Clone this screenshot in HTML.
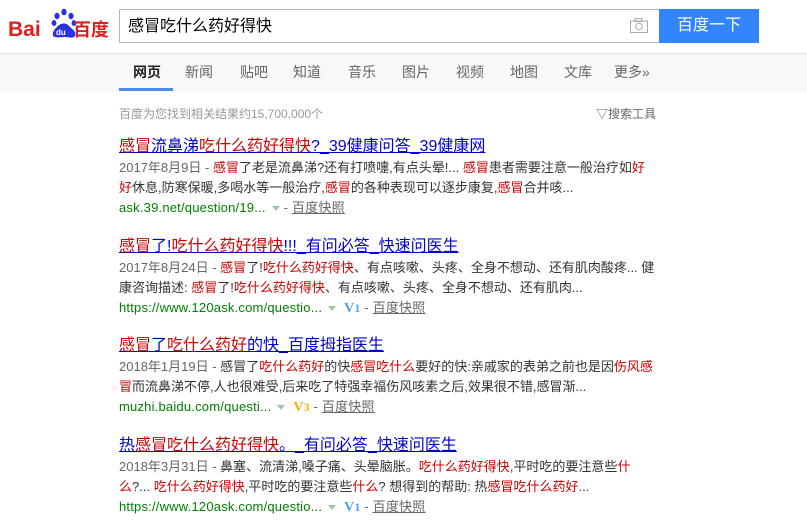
<!DOCTYPE html>
<html><head><meta charset="utf-8"><style>
*{margin:0;padding:0;box-sizing:border-box}
body{width:807px;height:523px;background:#fff;font-family:"Liberation Sans","Noto Sans CJK SC",sans-serif;position:relative;overflow:hidden;color:#333}
.abs{position:absolute}
#box{left:119px;top:9px;width:541px;height:34px;border:1px solid #b8b8b8;border-right:none;font-size:16px;line-height:33px;padding-left:8px;color:#000}
#btn{left:659px;top:9px;width:100px;height:34px;background:#3385ff;color:#fff;font-size:16px;line-height:34px;text-align:center}
#nav{left:0;top:53px;width:807px;height:38px;background:#f8f8f8;border-top:1px solid #e5e5e5}
.tab{top:53px;font-size:14px;line-height:38px;color:#666}
#ul{left:119px;top:88px;width:54px;height:3px;background:#4e8ae6}
.cnt{font-size:12px;color:#999}
.r{position:absolute;left:119px;width:560px}
.t{font-size:16px;line-height:22px;height:22px;text-decoration:underline;color:#00c;white-space:nowrap}
.a{font-size:13px;line-height:20px;color:#333;white-space:nowrap}
.d{color:#666}
em{font-style:normal;color:#c00}
.u{font-size:13px;line-height:20px;color:#008000;white-space:nowrap;letter-spacing:0.2px}
.u .k{color:#666;text-decoration:underline}
.arr{display:inline-block;width:0;height:0;border-left:4px solid transparent;border-right:4px solid transparent;border-top:5px solid #99c6a0;margin:0 4px 1px 6px;vertical-align:middle}
.v{font-family:"Liberation Serif",serif;font-weight:bold;font-size:14px;margin-left:4px}
</style></head><body>
<svg class="abs" style="left:8px;top:5px" width="102" height="36" viewBox="0 0 102 36">
<text x="0" y="31" font-family="Liberation Sans" font-weight="bold" font-size="21" fill="#de1f1f">Bai</text>
<g fill="#2932e1"><ellipse cx="49" cy="11" rx="2.6" ry="3.2"/><ellipse cx="56" cy="7" rx="2.6" ry="3.3"/><ellipse cx="63" cy="11" rx="2.6" ry="3.2"/><ellipse cx="66" cy="18" rx="2.4" ry="3"/><ellipse cx="46" cy="18" rx="2.4" ry="3"/><path d="M47 32 C43 31 45 25 49 22 C52 18 58 17 61 21 C64 24 69 27 67 31 C65 34 61 32 57 32 C53 32 51 33 47 32Z"/></g>
<text x="48" y="30" font-family="Liberation Sans" font-weight="bold" font-size="8" fill="#fff">du</text>
<text x="65" y="31" font-family="Noto Sans CJK SC" font-weight="bold" font-size="18" fill="#de1f1f">百度</text>
</svg>
<div id="box" class="abs">感冒吃什么药好得快</div>
<svg class="abs" style="left:630px;top:18px" width="18" height="15" viewBox="0 0 18 15"><rect x="0.5" y="3" width="17" height="11.5" fill="none" stroke="#aaa"/><rect x="5" y="0.5" width="7" height="3" fill="none" stroke="#aaa"/><circle cx="9" cy="8.5" r="3.3" fill="none" stroke="#aaa"/></svg>
<div id="btn" class="abs">百度一下</div>
<div id="nav" class="abs"></div>
<div class="abs tab" style="left:133px;color:#222;font-weight:bold">网页</div>
<div class="abs tab" style="left:185px">新闻</div>
<div class="abs tab" style="left:240px">贴吧</div>
<div class="abs tab" style="left:293px">知道</div>
<div class="abs tab" style="left:348px">音乐</div>
<div class="abs tab" style="left:402px">图片</div>
<div class="abs tab" style="left:456px">视频</div>
<div class="abs tab" style="left:510px">地图</div>
<div class="abs tab" style="left:564px">文库</div>
<div class="abs tab" style="left:614px">更多»</div>
<div id="ul" class="abs"></div>
<div class="abs cnt" style="left:119px;top:105px">百度为您找到相关结果约15,700,000个</div>
<div class="abs" style="left:596px;top:105px;font-size:12px;color:#666">▽搜索工具</div>

<div class="r" style="top:136px">
<div class="t"><em>感冒</em>流鼻涕<em>吃什么药好得快</em>?_39健康问答_39健康网</div>
<div class="a"><span class="d">2017年8月9日 - </span><em>感冒</em>了老是流鼻涕?还有打喷嚏,有点头晕!... <em>感冒</em>患者需要注意一般治疗如<em>好</em></div>
<div class="a"><em>好</em>休息,防寒保暖,多喝水等一般治疗,<em>感冒</em>的各种表现可以逐步康复,<em>感冒</em>合并咳...</div>
<div class="u">ask.39.net/question/19...<span class="arr"></span><span style="color:#666">- </span><span class="k">百度快照</span></div>
</div>

<div class="r" style="top:236px">
<div class="t"><em>感冒</em>了!<em>吃什么药好得快</em>!!!_有问必答_快速问医生</div>
<div class="a"><span class="d">2017年8月24日 - </span><em>感冒</em>了!<em>吃什么药好得快</em>、有点咳嗽、头疼、全身不想动、还有肌肉酸疼... 健</div>
<div class="a">康咨询描述: <em>感冒</em>了!<em>吃什么药好得快</em>、有点咳嗽、头疼、全身不想动、还有肌肉...</div>
<div class="u">https://www.120ask.com/questio...<span class="arr"></span><span class="v" style="color:#4fa3e0">V<small>1</small></span><span style="color:#666"> - </span><span class="k">百度快照</span></div>
</div>

<div class="r" style="top:335px">
<div class="t"><em>感冒</em>了<em>吃什么药好</em>的快_百度拇指医生</div>
<div class="a"><span class="d">2018年1月19日 - </span>感冒了<em>吃什么药好</em>的快<em>感冒吃什么</em>要好的快:亲戚家的表弟之前也是因<em>伤风感</em></div>
<div class="a"><em>冒</em>而流鼻涕不停,人也很难受,后来吃了特强幸福伤风咳素之后,效果很不错,感冒渐...</div>
<div class="u">muzhi.baidu.com/questi...<span class="arr"></span><span class="v" style="color:#f5b000">V<small>3</small></span><span style="color:#666"> - </span><span class="k">百度快照</span></div>
</div>

<div class="r" style="top:435px">
<div class="t">热<em>感冒吃什么药好得快</em>。_有问必答_快速问医生</div>
<div class="a"><span class="d">2018年3月31日 - </span>鼻塞、流清涕,嗓子痛、头晕脑胀。<em>吃什么药好得快</em>,平时吃的要注意些<em>什</em></div>
<div class="a"><em>么</em>?... <em>吃什么药好得快</em>,平时吃的要注意些<em>什么</em>? 想得到的帮助: 热<em>感冒吃什么药好</em>...</div>
<div class="u">https://www.120ask.com/questio...<span class="arr"></span><span class="v" style="color:#4fa3e0">V<small>1</small></span><span style="color:#666"> - </span><span class="k">百度快照</span></div>
</div>
</body></html>
